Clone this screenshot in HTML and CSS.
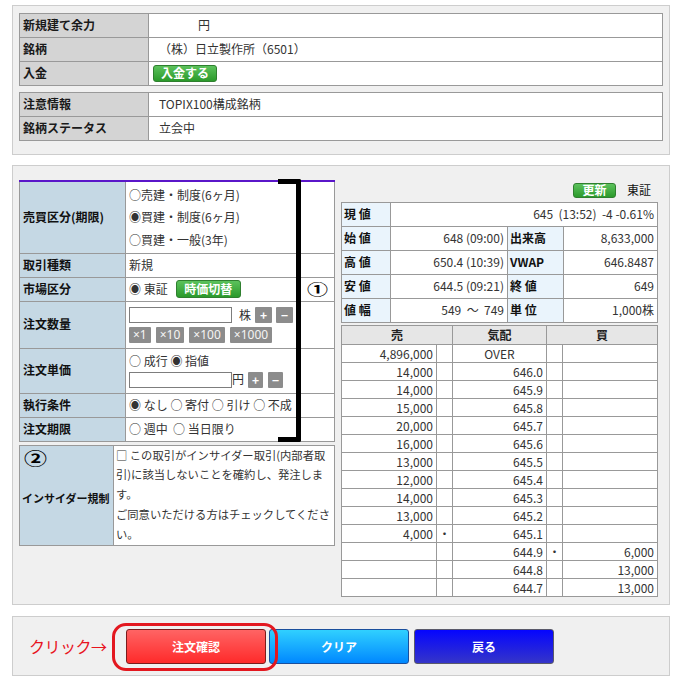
FILE: index.html
```html
<!DOCTYPE html>
<html lang="ja">
<head>
<meta charset="utf-8">
<title>注文入力</title>
<link rel="stylesheet" href="styles.css">
</head>
<body>
<div class="page">
  <section class="panel p1">
    <table class="info">
      <tr><th>新規建て余力</th><td><span class="yen">円</span></td></tr>
      <tr><th>銘柄</th><td>（株）日立製作所（6501）</td></tr>
      <tr><th>入金</th><td><span class="gbtn g-deposit">入金する</span></td></tr>
    </table>
    <table class="info">
      <tr><th>注意情報</th><td>TOPIX100構成銘柄</td></tr>
      <tr><th>銘柄ステータス</th><td>立会中</td></tr>
    </table>
  </section>

  <section class="panel p2">
    <div class="leftcol">
      <table class="order">
        <colgroup><col class="c-lab"><col></colgroup>
        <tr class="r-side"><th>売買区分(期限)</th><td>
          <div class="ln">○売建・制度(6ヶ月)</div>
          <div class="ln">◉買建・制度(6ヶ月)</div>
          <div class="ln">○買建・一般(3年)</div>
        </td></tr>
        <tr class="r24"><th>取引種類</th><td>新規</td></tr>
        <tr class="r24"><th>市場区分</th><td><span class="mkt-sel">◉ 東証</span><span class="gbtn g-switch">時価切替</span></td></tr>
        <tr class="r-qty"><th>注文数量</th><td>
          <div class="ctl"><input class="inp" type="text"><span class="unit u-kabu">株</span><span class="sq">+</span><span class="sq">−</span></div>
          <div class="ctl mults"><span class="mul">×1</span><span class="mul">×10</span><span class="mul">×100</span><span class="mul">×1000</span></div>
        </td></tr>
        <tr class="r-price"><th>注文単価</th><td>
          <div class="ln2">○ 成行 ◉ 指値</div>
          <div class="ctl"><input class="inp" type="text"><span class="unit u-yen">円</span><span class="sq sq-s">+</span><span class="sq sq-s">−</span></div>
        </td></tr>
        <tr class="r24"><th>執行条件</th><td>◉ なし ○ 寄付 ○ 引け ○ 不成</td></tr>
        <tr class="r24"><th>注文期限</th><td>○ 週中 &nbsp;○ 当日限り</td></tr>
      </table>

      <table class="order insider">
        <colgroup><col class="c-ins"><col></colgroup>
        <tr><th>インサイダー規制</th><td>□ この取引がインサイダー取引(内部者取<br>引)に該当しないことを確約し、発注しま<br>す。<br>ご同意いただける方はチェックしてくださ<br>い。</td></tr>
      </table>

      <div class="bracket"></div>
      <span class="mark mark1">①</span>
      <span class="mark mark2">②</span>
    </div>

    <div class="rightcol">
      <div class="quotebar"><span class="gbtn g-refresh">更新</span><span class="mkt">東証</span></div>
      <table class="quote">
        <colgroup><col class="q1"><col class="q2"><col class="q3"><col class="q4"></colgroup>
        <tr><th>現 値</th><td colspan="3">645 &nbsp;(13:52) &nbsp;-4 -0.61%</td></tr>
        <tr><th>始 値</th><td>648 (09:00)</td><th>出来高</th><td>8,633,000</td></tr>
        <tr><th>高 値</th><td>650.4 (10:39)</td><th>VWAP</th><td>646.8487</td></tr>
        <tr><th>安 値</th><td>644.5 (09:21)</td><th>終 値</th><td>649</td></tr>
        <tr><th>値 幅</th><td>549 &nbsp;～ &nbsp;749</td><th>単 位</th><td>1,000株</td></tr>
      </table>
      <table class="book">
        <colgroup><col class="b-qty"><col class="b-mk"><col class="b-px"><col class="b-mk"><col class="b-qty"></colgroup>
        <tr><th colspan="2">売</th><th>気配</th><th colspan="2">買</th></tr>
        <tr><td>4,896,000</td><td></td><td class="over">OVER</td><td></td><td></td></tr>
        <tr><td>14,000</td><td></td><td>646.0</td><td></td><td></td></tr>
        <tr><td>14,000</td><td></td><td>645.9</td><td></td><td></td></tr>
        <tr><td>15,000</td><td></td><td>645.8</td><td></td><td></td></tr>
        <tr><td>20,000</td><td></td><td>645.7</td><td></td><td></td></tr>
        <tr><td>16,000</td><td></td><td>645.6</td><td></td><td></td></tr>
        <tr><td>13,000</td><td></td><td>645.5</td><td></td><td></td></tr>
        <tr><td>12,000</td><td></td><td>645.4</td><td></td><td></td></tr>
        <tr><td>14,000</td><td></td><td>645.3</td><td></td><td></td></tr>
        <tr><td>13,000</td><td></td><td>645.2</td><td></td><td></td></tr>
        <tr><td>4,000</td><td class="dot">・</td><td>645.1</td><td></td><td></td></tr>
        <tr><td></td><td></td><td>644.9</td><td class="dot">・</td><td>6,000</td></tr>
        <tr><td></td><td></td><td>644.8</td><td></td><td>13,000</td></tr>
        <tr><td></td><td></td><td>644.7</td><td></td><td>13,000</td></tr>
      </table>
    </div>
  </section>

  <section class="panel p3">
    <span class="click">クリック→</span>
    <div class="btns">
      <button class="btn b-red" type="button">注文確認</button>
      <button class="btn b-blue" type="button">クリア</button>
      <button class="btn b-navy" type="button">戻る</button>
    </div>
    <span class="oval"></span>
  </section>
</div>
</body>
</html>
```

FILE: styles.css
```css
* { box-sizing: border-box; }
html, body { margin: 0; padding: 0; background: #fff; }
body {
  font-family: "Noto Sans CJK JP", "Noto Sans", sans-serif;
  font-size: 12px;
  line-height: 1.4;
  color: #222;
}
.page { padding: 5px 0 0 12px; width: 685px; }

.panel { width: 658px; border: 1px solid #cdcdcd; background: #f0f0f0; }
.p1 { padding: 7px 6px 13px 6px; display: flex; flex-direction: column; gap: 6px; }
.p2 { margin-top: 10px; padding: 14px 12px 7px 6px; display: flex; gap: 6px; align-items: flex-start; }
.p3 { margin-top: 11px; height: 60px; position: relative; display: flex; align-items: center; padding-left: 16px; }

table { border-collapse: collapse; table-layout: fixed; background: #fff; }
th, td { border: 1px solid #999; padding: 0; text-align: left; vertical-align: middle; font-weight: normal; }

/* top info */
.info { width: 644px; }
.info th { width: 129px; height: 24px; background: #d4d4d4; font-weight: bold; padding-left: 3px; color: #1a1a1a; }
.info td { padding-left: 10px; color: #333; }
.yen { margin-left: 39px; }

/* green buttons */
.gbtn {
  display: inline-flex; align-items: center; justify-content: center;
  background: linear-gradient(#5cc25c, #2b9a2b);
  border: 1px solid #2f7f2f; border-radius: 3px;
  color: #fff; font-weight: bold; line-height: 1;
}
.g-deposit { width: 64px; height: 17px; margin-left: -6px; }
.g-switch { width: 65px; height: 18px; margin-left: 8px; }
.g-refresh { width: 43px; height: 15px; }

/* order form */
.leftcol { width: 316px; position: relative; }
.order { width: 316px; }
.order col.c-lab { width: 106px; }
.order th { background: #c5d8e4; font-weight: bold; padding-left: 3px; color: #111; }
.order td { padding-left: 3px; color: #333; }
.order tr:first-child th, .order tr:first-child td { border-top: 2px solid #5a16c9; }
.r-side th, .r-side td { height: 72px; }
.r24 th, .r24 td { height: 24px; }
.r-qty th, .r-qty td { height: 47px; }
.r-price th, .r-price td { height: 45px; }
.ln { height: 22.5px; line-height: 22.5px; }
.ln2 { height: 20px; line-height: 20px; margin-top: -2px; }
.mkt-sel { display: inline-block; }
.ctl { display: flex; align-items: center; height: 17px; }
.mults { margin-top: 3px; gap: 5px; height: 16px; }
.inp {
  width: 103px; height: 16px; border: 1px solid #7d7d7d; background: #fff;
  padding: 0; margin: 0; font: inherit;
}
.unit { color: #333; }
.u-kabu { margin: 0 4px 0 7px; }
.u-yen { margin-right: 4px; }
.sq {
  width: 17px; height: 16px; background: #8c8c8c; color: #fff; border-radius: 1px;
  display: inline-flex; align-items: center; justify-content: center; font-weight: bold; margin-right: 4px; line-height: 1;
}
.sq-s { width: 15px; margin-right: 5px; }
.mul {
  height: 16px; padding: 0 4px; background: #8c8c8c; color: #f4f4f4; border-radius: 1px;
  display: inline-flex; align-items: center; line-height: 1;
  font-family: "Noto Sans", "Noto Sans CJK JP", sans-serif;
}
.insider { margin-top: 3px; }
.insider col.c-ins { width: 94px; }
.insider th { font-size: 11px; padding-left: 2px; padding-top: 8px; }
.insider td { height: 100px; line-height: 19.8px; white-space: nowrap; font-size: 11.3px; padding-left: 2px; }
.insider tr:first-child th, .insider tr:first-child td { border-top: 1px solid #999; }

.bracket {
  position: absolute; left: 259px; top: -1px; width: 23px; height: 263px;
  border: 5px solid #000; border-left: 0; border-radius: 0 2px 2px 0;
}
.mark { position: absolute; font-weight: bold; color: #000; line-height: 1; transform: scaleY(0.72); }
.mark1 { left: 288px; top: 98px; font-size: 21px; }
.mark2 { left: 5px; top: 267px; font-size: 23px; }

/* quote */
.rightcol { width: 316px; }
.quotebar { height: 20px; margin-top: 0; margin-bottom: 2px; display: flex; align-items: center; justify-content: flex-end; padding-right: 6px; }
.mkt { margin-left: 11px; color: #111; }
.quote { width: 316px; }
.quote col.q1 { width: 49px; }
.quote col.q2 { width: 117px; }
.quote col.q3 { width: 56px; }
.quote col.q4 { width: 94px; }
.quote th { height: 24px; background: #eaf4fc; font-weight: bold; padding-left: 2px; color: #111; }
.quote td { text-align: right; padding-right: 3px; color: #333; white-space: nowrap; }

.book { width: 316px; margin-top: 2px; }
.book col.b-qty { width: 95px; }
.book col.b-mk { width: 16px; }
.book col.b-px { width: 94px; }
.book th { height: 19px; background: #e6e6e6; text-align: center; font-weight: bold; color: #222; }
.book td { height: 18px; text-align: right; padding-right: 3px; color: #333; line-height: 16px; }
.book td.over { text-align: center; padding-right: 0; }
.book td.dot { text-align: center; padding-right: 0; }

/* bottom buttons */
.click { width: 97px; color: #e8141e; font-size: 16px; letter-spacing: -0.5px; }
.btns { display: flex; gap: 3px; }
.btn {
  width: 140px; height: 35px; border-radius: 3px; color: #fff; font-weight: bold;
  font-family: inherit; font-size: 12px; padding: 0; cursor: pointer;
}
.b-red { background: linear-gradient(#ff6464, #ff2a2a); border: 1px solid #7a1c1c; }
.b-blue { background: linear-gradient(#30d0ff, #0088ff); border: 1px solid #1a4f9c; }
.b-navy { background: linear-gradient(#0505ff, #3535c8); border: 1px solid #5a5a6a; margin-left: 2px; }
.oval {
  position: absolute; left: 99px; top: 6px; width: 166px; height: 48px;
  border: 3px solid #e3171f; border-radius: 14px;
}
```
